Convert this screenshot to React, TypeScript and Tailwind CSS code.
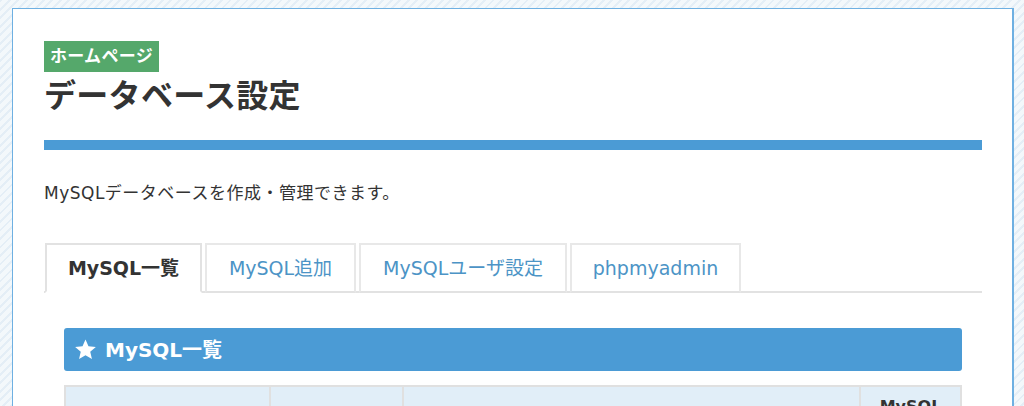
const tabs = ['MySQL一覧', 'MySQL追加', 'MySQLユーザ設定', 'phpmyadmin'];
const tabWidths = ['w-[157px]', 'w-[151px]', 'w-[208px]', 'w-[171px]'];

function Star() {
  return (
    <svg viewBox="0 0 24 24" className="w-[23px] h-[23px] fill-white" aria-hidden>
      <path d="M12 1.5l3.1 7.1 7.7.67-5.85 5.08 1.75 7.55L12 17.95 5.3 21.9l1.75-7.55L1.2 9.27l7.7-.67z" />
    </svg>
  );
}

export default function App() {
  return (
    <div
      className="h-[406px] overflow-hidden px-[12px] pt-[8px] bg-[repeating-linear-gradient(135deg,#e4eef6_0px,#e4eef6_2px,#f3f8fb_2px,#f3f8fb_6px)]"
      style={{ fontFamily: '"DejaVu Sans", "Noto Sans CJK JP", sans-serif' }}
    >
      <div className="bg-white border border-[#6eb0e2] border-r-2 pl-[31px] pr-[30px] pt-[32px] pb-10 w-[1002px]">
        <span className="inline-block bg-[#55a86b] text-white font-bold text-[17px] leading-[31px] px-[6px] h-[31px] tracking-[0.3px]">
          ホームページ
        </span>
        <h1 className="mt-[2px] text-[32px] font-bold text-[#333] leading-[44px] tracking-[0.3px]">
          データベース設定
        </h1>
        <div className="mt-[22px] h-[10px] bg-[#4b9bd5]" />
        <p className="mt-[32px] text-[17px] text-[#333] leading-[22px] tracking-[0.5px]">
          MySQLデータベースを作成・管理できます。
        </p>

        <div className="mt-[39px] flex gap-[3px] border-b-2 border-[#e2e2e2] pl-px">
          {tabs.map((t, i) => (
            <div
              key={t}
              className={`${tabWidths[i]} h-[50px] -mb-[2px] flex items-center justify-center text-[19px] border-2 ${
                i === 0
                  ? 'bg-white border-[#e2e2e2] border-b-white font-bold text-[#333]'
                  : 'border-[#e8e8e8] border-b-[#e2e2e2] text-[#4c94c6]'
              }`}
            >
              {t}
            </div>
          ))}
        </div>

        <div className="px-[20px] pt-[35px]">
          <div className="h-[43px] rounded-[3px] bg-[#4b9bd5] flex items-center gap-[8px] px-[10px] text-white font-bold text-[20px]">
            <Star />
            <span>MySQL一覧</span>
          </div>
          <table className="mt-[14px] w-full border-collapse text-[16px] text-[#333]">
            <thead>
              <tr className="bg-[#e1eef8]">
                <th className="border-2 border-[#e0e0e0] w-[205px] h-[90px] pt-[60px] font-bold">データベース名</th>
                <th className="border-2 border-[#e0e0e0] w-[133px] pt-[60px] font-bold">容量</th>
                <th className="border-2 border-[#e0e0e0] pt-[60px] font-bold">ユーザ</th>
                <th className="border-2 border-[#e0e0e0] w-[101px] align-top font-bold leading-[20px] pt-[10px]">
                  MySQL
                  <br />
                  バージョン
                </th>
              </tr>
            </thead>
            <tbody>
              <tr>
                <td className="border-2 border-[#e0e0e0] h-[50px] px-3">db01</td>
                <td className="border-2 border-[#e0e0e0] px-3">0MB</td>
                <td className="border-2 border-[#e0e0e0] px-3">user01</td>
                <td className="border-2 border-[#e0e0e0] px-3">5.7</td>
              </tr>
            </tbody>
          </table>
        </div>
      </div>
    </div>
  );
}
